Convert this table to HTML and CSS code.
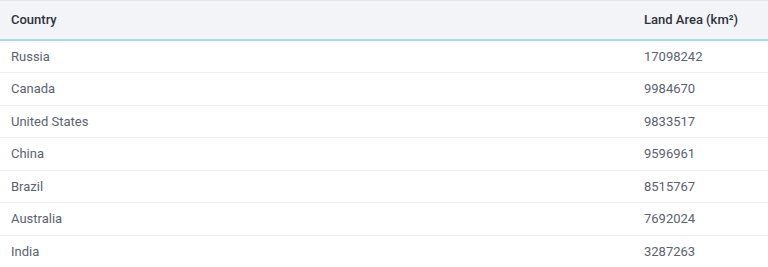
FILE: index.html
```html
<!DOCTYPE html>
<html>
<head>
<meta charset="utf-8">
<link rel="stylesheet" href="styles.css">
</head>
<body>
<table class="grid">
  <thead>
    <tr><th class="c1">Country</th><th class="c2">Land Area (km²)</th></tr>
  </thead>
  <tbody>
    <tr><td class="c1">Russia</td><td class="c2">17098242</td></tr>
    <tr><td class="c1">Canada</td><td class="c2">9984670</td></tr>
    <tr><td class="c1">United States</td><td class="c2">9833517</td></tr>
    <tr><td class="c1">China</td><td class="c2">9596961</td></tr>
    <tr><td class="c1">Brazil</td><td class="c2">8515767</td></tr>
    <tr><td class="c1">Australia</td><td class="c2">7692024</td></tr>
    <tr><td class="c1">India</td><td class="c2">3287263</td></tr>
  </tbody>
</table>
</body>
</html>
```
FILE: styles.css
```css
html, body {
  margin: 0;
  padding: 0;
  background: #ffffff;
}
body {
  font-family: Roboto, "Liberation Sans", sans-serif;
  font-size: 13px;
  line-height: 19.5px;
}
.grid {
  width: 768px;
  border-collapse: collapse;
  border-top: 1px solid #e3e5ea;
}
.grid th {
  background: #f3f4f7;
  color: #2f3237;
  font-weight: 500;
  text-align: left;
  padding: 9px 11px;
  border-bottom: 2px solid #a9dce9;
}
.grid td {
  color: #5b6270;
  padding: 6px 11px;
  border-bottom: 1px solid #ebedf0;
}
.grid .c1 {
  width: 610px;
}
.grid .c2 {
  padding-left: 12px;
}
```
